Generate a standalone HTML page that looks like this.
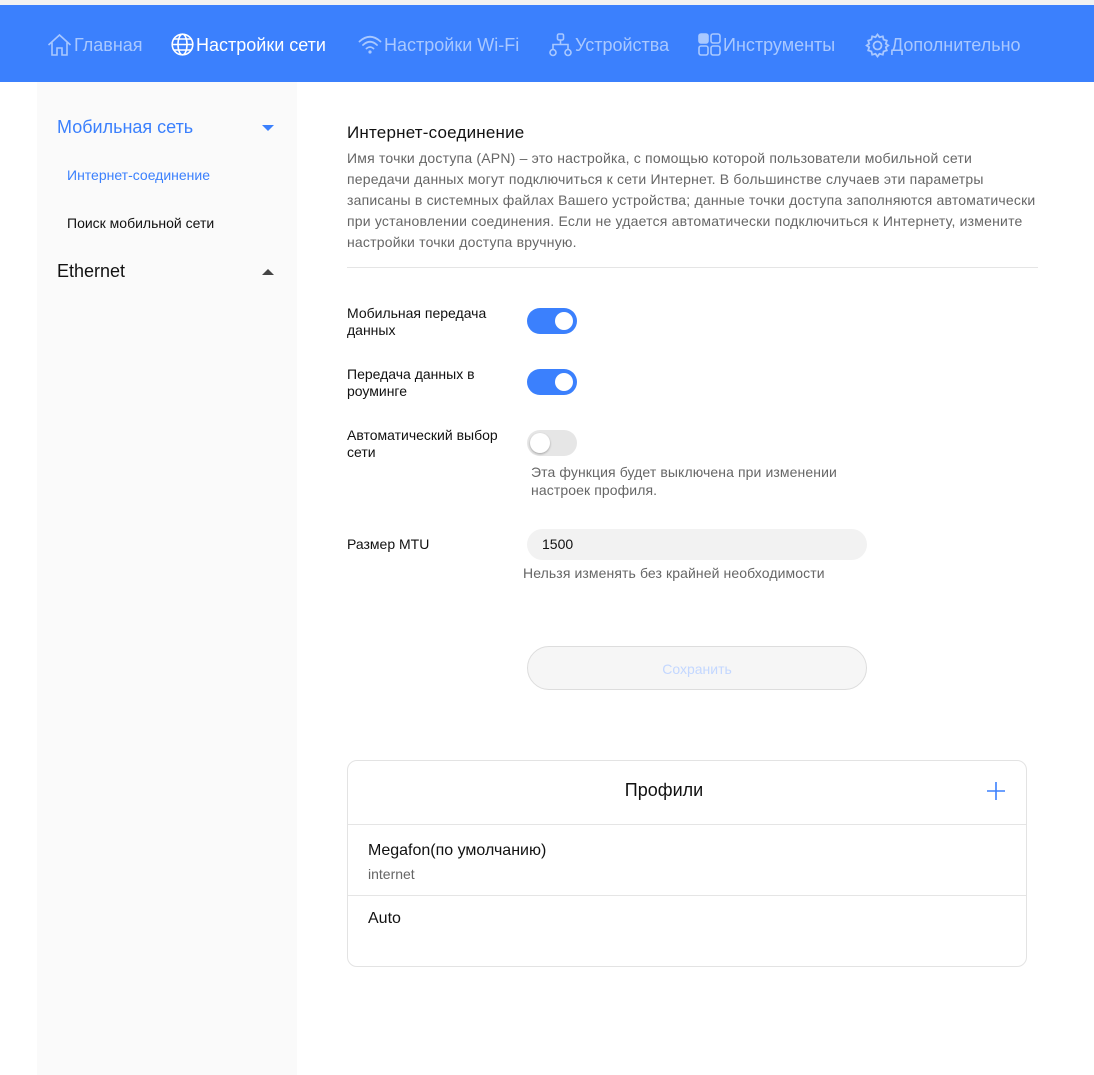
<!DOCTYPE html>
<html><head><meta charset="utf-8"><style>
*{margin:0;padding:0;box-sizing:border-box}
body{width:1094px;height:1075px;background:#fff;font-family:"Liberation Sans",Arial,sans-serif;position:relative;overflow:hidden;color:#000}
.a{position:absolute;white-space:nowrap}
.top{position:absolute;left:0;top:0;width:1094px;height:5px;background:#f2f2f2}
.hdr{position:absolute;left:0;top:5px;width:1094px;height:77px;background:#3b80fd}
.nav{position:absolute;top:34px;font-size:18px;color:#a9c8ff;line-height:22px}
.nav.on{color:#fff}
.ic{position:absolute;top:33px}
.side{position:absolute;left:37px;top:82px;width:260px;height:993px;background:#fafafa}
.tg{position:absolute;left:527px;width:50px;height:26px;border-radius:13px;background:#3b80fd}
.tg i{position:absolute;top:4px;right:4px;width:18px;height:18px;border-radius:50%;background:#fff}
.tg.off{background:#e6e6e6}
.tg.off i{left:3px;right:auto;top:3px;width:20px;height:20px;box-shadow:0 1px 2px rgba(0,0,0,.3)}
.lbl{position:absolute;left:347px;font-size:14px;line-height:17px;color:#111}
</style></head><body>
<div class="top"></div>
<div class="hdr"></div>
<svg class="ic" style="left:47px" width="25" height="24" viewBox="0 0 25 24" fill="none" stroke="#a9c8ff" stroke-width="1.6"><path d="M1.5 12 L12.5 2 L23.5 12 M5 9.5 V22 H10 V15 H15 V22 H20 V9.5"/></svg>
<div class="nav" style="left:74px">Главная</div>
<svg class="ic" style="left:171px" width="23" height="23" viewBox="0 0 23 23" fill="none" stroke="#fff" stroke-width="1.6"><circle cx="11.5" cy="11.5" r="10.3"/><ellipse cx="11.5" cy="11.5" rx="4.5" ry="10.3"/><path d="M1.2 11.5H21.8M3 6H20M3 17H20"/></svg>
<div class="nav on" style="left:196px">Настройки сети</div>
<svg class="ic" style="left:358px" width="24" height="22" viewBox="0 0 24 22" fill="none" stroke="#a9c8ff" stroke-width="1.8" stroke-linecap="round"><path d="M1.5 8.5 Q12 -1 22.5 8.5M5 12 Q12 5.5 19 12M8.5 15.5 Q12 12.5 15.5 15.5"/><circle cx="12" cy="19" r="1.6" fill="#a9c8ff" stroke="none"/></svg>
<div class="nav" style="left:384px">Настройки Wi-Fi</div>
<svg class="ic" style="left:549px" width="23" height="24" viewBox="0 0 23 24" fill="none" stroke="#a9c8ff" stroke-width="1.6"><rect x="8.5" y="1" width="6" height="6" rx="1.5"/><path d="M11.5 7V11.5M4 16.5V11.5H19V16.5"/><circle cx="4" cy="19.5" r="3"/><circle cx="19" cy="19.5" r="3"/></svg>
<div class="nav" style="left:575px">Устройства</div>
<svg class="ic" style="left:698px" width="23" height="23" viewBox="0 0 23 23" fill="none" stroke="#a9c8ff" stroke-width="1.6"><rect x="1" y="1" width="9" height="9" rx="2" fill="#a9c8ff"/><rect x="13" y="1" width="9" height="9" rx="2"/><rect x="1" y="13" width="9" height="9" rx="2"/><rect x="13" y="13" width="9" height="9" rx="2"/></svg>
<div class="nav" style="left:723px">Инструменты</div>
<svg class="ic" style="left:865px" width="25" height="25" viewBox="0 0 25 25" fill="none" stroke="#a9c8ff" stroke-width="1.8"><path d="M12.5 1.5 14.5 4.2 17.8 3.3 18.6 6.6 21.8 7.6 20.8 10.8 23.3 12.5 20.8 14.2 21.8 17.4 18.6 18.4 17.8 21.7 14.5 20.8 12.5 23.5 10.5 20.8 7.2 21.7 6.4 18.4 3.2 17.4 4.2 14.2 1.7 12.5 4.2 10.8 3.2 7.6 6.4 6.6 7.2 3.3 10.5 4.2Z"/><circle cx="12.5" cy="12.5" r="4"/></svg>
<div class="nav" style="left:891px">Дополнительно</div>

<div class="side"></div>
<div class="a" style="left:57px;top:117px;font-size:18px;color:#3b80fd">Мобильная сеть</div>
<svg class="a" style="left:262px;top:125px" width="12" height="7"><path d="M0 0H12L6 6Z" fill="#3b80fd"/></svg>
<div class="a" style="left:67px;top:167px;font-size:14px;color:#3b80fd">Интернет-соединение</div>
<div class="a" style="left:67px;top:215px;font-size:14px;color:#111">Поиск мобильной сети</div>
<div class="a" style="left:57px;top:261px;font-size:18px;color:#111">Ethernet</div>
<svg class="a" style="left:262px;top:268px" width="12" height="7"><path d="M0 7H12L6 1Z" fill="#444"/></svg>

<div class="a" style="left:347px;top:123px;font-size:17px;color:#111;letter-spacing:0.2px">Интернет-соединение</div>
<div class="a" style="left:347px;top:148px;font-size:14px;line-height:21px;color:#666;letter-spacing:0.2px">Имя точки доступа (APN) – это настройка, с помощью которой пользователи мобильной сети<br>передачи данных могут подключиться к сети Интернет. В большинстве случаев эти параметры<br>записаны в системных файлах Вашего устройства; данные точки доступа заполняются автоматически<br>при установлении соединения. Если не удается автоматически подключиться к Интернету, измените<br>настройки точки доступа вручную.</div>
<div class="a" style="left:347px;top:267px;width:691px;height:1px;background:#e5e5e5"></div>

<div class="lbl" style="top:305px">Мобильная передача<br>данных</div>
<div class="tg" style="top:308px"><i></i></div>
<div class="lbl" style="top:366px">Передача данных в<br>роуминге</div>
<div class="tg" style="top:369px"><i></i></div>
<div class="lbl" style="top:427px">Автоматический выбор<br>сети</div>
<div class="tg off" style="top:430px"><i></i></div>
<div class="a" style="left:531px;top:463px;font-size:14px;line-height:18px;color:#666;letter-spacing:0.1px">Эта функция будет выключена при изменении<br>настроек профиля.</div>

<div class="lbl" style="top:536px">Размер MTU</div>
<div class="a" style="left:527px;top:529px;width:340px;height:31px;border-radius:16px;background:#f2f2f2;font-size:14px;line-height:31px;padding-left:15px;color:#111">1500</div>
<div class="a" style="left:523px;top:565px;font-size:14px;color:#666;letter-spacing:0.1px">Нельзя изменять без крайней необходимости</div>

<div class="a" style="left:527px;top:646px;width:340px;height:44px;border-radius:22px;background:#f6f6f6;border:1px solid #ddd;font-size:14px;line-height:44px;text-align:center;color:#c3d7ff">Сохранить</div>

<div class="a" style="left:347px;top:760px;width:680px;height:207px;border:1px solid #e3e3e3;border-radius:10px"></div>
<div class="a" style="left:347px;top:780px;width:634px;text-align:center;font-size:18px;color:#111">Профили</div>
<svg class="a" style="left:986px;top:781px" width="20" height="20" stroke="#3b80fd" stroke-width="1.6"><path d="M10 1V19M1 10H19"/></svg>
<div class="a" style="left:348px;top:824px;width:678px;height:1px;background:#e5e5e5"></div>
<div class="a" style="left:368px;top:842px;font-size:16px;color:#111">Megafon(по умолчанию)</div>
<div class="a" style="left:368px;top:866px;font-size:14px;color:#666">internet</div>
<div class="a" style="left:348px;top:895px;width:678px;height:1px;background:#e5e5e5"></div>
<div class="a" style="left:368px;top:910px;font-size:16px;color:#111">Auto</div>
</body></html>
